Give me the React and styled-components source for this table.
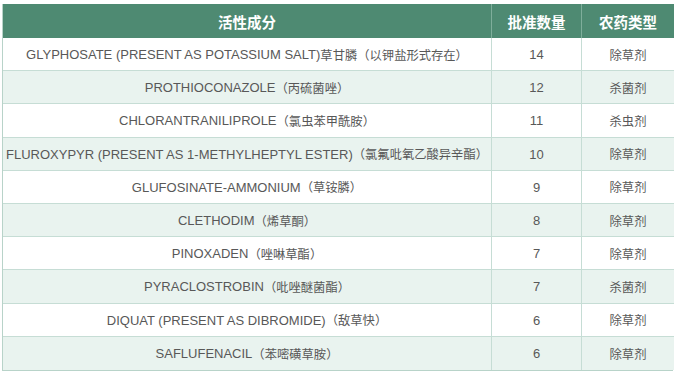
import React from "react";
import styled, { createGlobalStyle } from "styled-components";

const Global = createGlobalStyle`
  html, body { margin: 0; padding: 0; background: #ffffff; }
  body { font-family: "Liberation Sans", Arial, "Noto Sans CJK SC", sans-serif; }
`;

const Page = styled.div`
  padding: 4px 4px 0 2px;
  width: 677px;
  box-sizing: border-box;
`;

const Table = styled.div`
  display: grid;
  grid-template-columns: 489px 90px 92px;
  width: 671px;
  box-sizing: border-box;
  border: 1px solid #b8d3c9;
  border-top: none;
`;

const HeadCell = styled.div`
  height: 34px;
  background: #4e8a72;
  color: #ffffff;
  font-family: "Noto Sans CJK SC", sans-serif;
  font-weight: 700;
  font-size: 14.5px;
  display: flex;
  align-items: center;
  justify-content: center;
  box-sizing: border-box;
  border-right: ${(p) => (p.$last ? "none" : "1px solid #7fae9b")};
`;

const Cell = styled.div`
  height: 33.2px;
  background: ${(p) => (p.$alt ? "#e9f3ef" : "#ffffff")};
  color: #585858;
  font-size: 13px;
  display: flex;
  align-items: center;
  justify-content: center;
  box-sizing: border-box;
  white-space: nowrap;
  padding-top: 1px;
  border-right: ${(p) => (p.$last ? "none" : "1px solid #c6ddd5")};
  border-bottom: ${(p) => (p.$bottom ? "none" : "1px solid #c6ddd5")};
  font-family: "Liberation Sans", Arial, "Noto Sans CJK SC", sans-serif;
`;

const Cjk = styled.span`
  font-family: "Noto Sans CJK SC", sans-serif;
  font-size: 12.3px;
`;

const rows = [
  ["GLYPHOSATE (PRESENT AS POTASSIUM SALT)", "草甘膦（以钾盐形式存在）", 14, "除草剂"],
  ["PROTHIOCONAZOLE", "（丙硫菌唑）", 12, "杀菌剂"],
  ["CHLORANTRANILIPROLE", "（氯虫苯甲酰胺）", 11, "杀虫剂"],
  ["FLUROXYPYR (PRESENT AS 1-METHYLHEPTYL ESTER)", "（氯氟吡氧乙酸异辛酯）", 10, "除草剂"],
  ["GLUFOSINATE-AMMONIUM", "（草铵膦）", 9, "除草剂"],
  ["CLETHODIM", "（烯草酮）", 8, "除草剂"],
  ["PINOXADEN", "（唑啉草酯）", 7, "除草剂"],
  ["PYRACLOSTROBIN", "（吡唑醚菌酯）", 7, "杀菌剂"],
  ["DIQUAT (PRESENT AS DIBROMIDE)", "（敌草快）", 6, "除草剂"],
  ["SAFLUFENACIL", "（苯嘧磺草胺）", 6, "除草剂"],
];

export default function App() {
  return (
    <Page>
      <Global />
      <Table>
        <HeadCell>活性成分</HeadCell>
        <HeadCell>批准数量</HeadCell>
        <HeadCell $last>农药类型</HeadCell>
        {rows.map(([latin, cjk, n, type], i) => {
          const alt = i % 2 === 1;
          const bottom = i === rows.length - 1;
          return (
            <React.Fragment key={i}>
              <Cell $alt={alt} $bottom={bottom}>
                {latin}
                <Cjk>{cjk}</Cjk>
              </Cell>
              <Cell $alt={alt} $bottom={bottom}>{n}</Cell>
              <Cell $alt={alt} $bottom={bottom} $last>
                <Cjk>{type}</Cjk>
              </Cell>
            </React.Fragment>
          );
        })}
      </Table>
    </Page>
  );
}
